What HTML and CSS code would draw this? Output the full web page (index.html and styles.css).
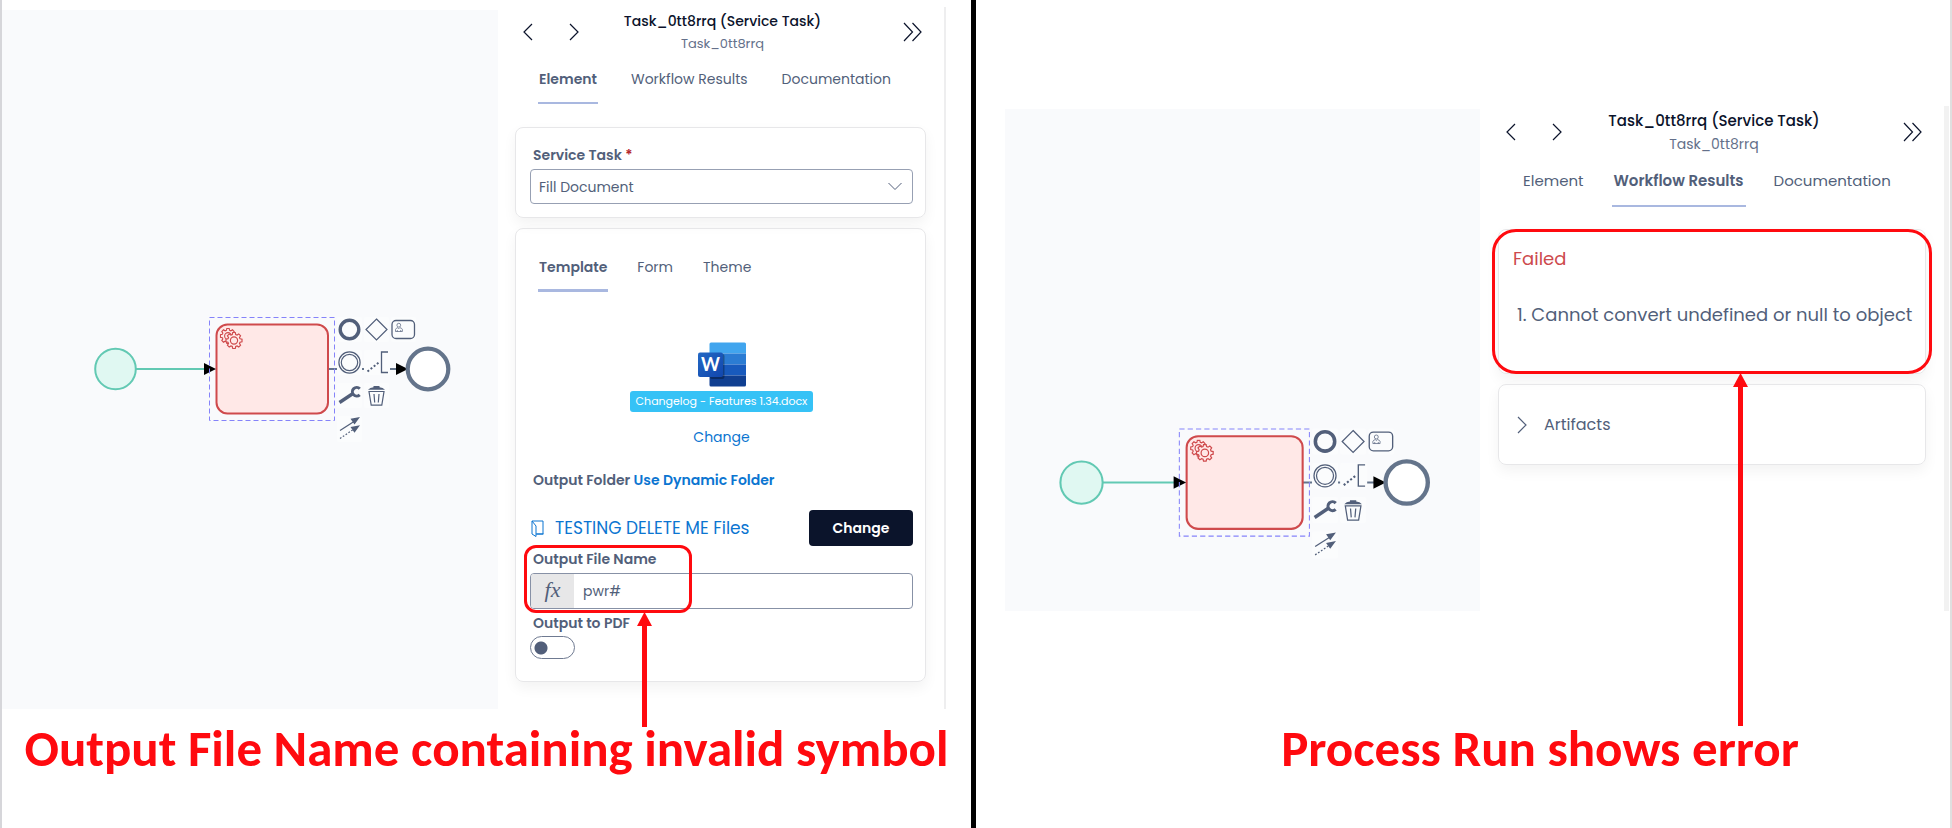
FILE: index.html
```html
<!DOCTYPE html>
<html lang="en">
<head>
<meta charset="utf-8">
<title>Output file name error</title>
<link rel="stylesheet" href="styles.css">
</head>
<body>
<svg class="defs" aria-hidden="true">
  <symbol id="gear" viewBox="-10 -10 20 20">
    <path d="M6.7-1.9 8.9-1.4V1.4L6.7 1.9 6.1 3.4 7.3 5.3 5.3 7.3 3.4 6.1 1.9 6.7 1.4 8.9H-1.4L-1.9 6.7-3.4 6.1-5.3 7.3-7.3 5.3-6.1 3.4-6.7 1.9-8.9 1.4V-1.4L-6.7-1.9-6.1-3.4-7.3-5.3-5.3-7.3-3.4-6.1-1.9-6.7-1.4-8.9H1.4L1.9-6.7 3.4-6.1 5.3-7.3 7.3-5.3 6.1-3.4Z" fill="#ffe8e7" stroke="#cf4a4c" stroke-width="1.300"/>
    <circle r="4" fill="none" stroke="#cf4a4c" stroke-width="1.300"/>
  </symbol>
  <symbol id="flow" viewBox="90 310 370 140">
    <path d="M136 369H206" stroke="#62c9b3" stroke-width="2"/>
    <circle cx="115.500" cy="369" r="20.300" fill="#e0f8f2" stroke="#62c9b3" stroke-width="2"/>
    <path d="M328 369H400" stroke="#64748b" stroke-width="2"/>
    <rect x="216.500" y="324.500" width="111.500" height="89" rx="11" fill="#ffe8e7" stroke="#cf4a4c" stroke-width="2"/>
    <use href="#gear" x="219.500" y="327.500" width="17" height="17"/>
    <use href="#gear" x="225" y="331.500" width="18" height="18"/>
    <path d="M204 363 216 369 204 375ZM396 363 408 369 396 375Z" fill="#000"/>
    <circle cx="428" cy="369" r="20.300" fill="#fff" stroke="#64748b" stroke-width="4.200"/>
    <rect x="209.500" y="317.500" width="125" height="103" fill="none" stroke="#8583fa" stroke-dasharray="5 3"/>
    <g fill="#fbfcfd">
      <rect x="337" y="317" width="25" height="25" rx="2"/><rect x="364" y="317" width="25" height="25" rx="2"/><rect x="391" y="317" width="25" height="25" rx="2"/>
      <rect x="337" y="350" width="25" height="25" rx="2"/><rect x="364" y="350" width="26" height="25" rx="2"/>
      <rect x="337" y="383" width="25" height="25" rx="2"/><rect x="364" y="383" width="25" height="25" rx="2"/><rect x="337" y="416" width="25" height="26" rx="2"/>
    </g>
    <g fill="none" stroke="#525f7a" stroke-width="1.200">
      <circle cx="349.500" cy="329.500" r="9.300" stroke-width="3.400"/>
      <path d="M376.500 319 387 329.500 376.500 340 366 329.500Z"/>
      <rect x="392" y="320.500" width="22.500" height="18" rx="4" stroke-width="1.300"/>
      <g stroke-width=".7"><circle cx="398.800" cy="325.200" r="1.900"/><path d="M395.500 331.500V329.500Q396 328 397.800 327.700L398.800 328.700 399.800 327.700Q402 328 402.400 329.500V331.500ZM397.300 331.500V330M400.700 331.500V330"/></g>
      <circle cx="349.500" cy="362.500" r="10.600"/><circle cx="349.500" cy="362.500" r="8.200"/>
      <path d="M367.500 371.500 379.500 362" stroke-width="2" stroke-dasharray="2 2"/>
      <path d="M388 352H381.500V372.500H388" stroke-width="1.300"/>
      <path d="M339.500 402.500 353 393.500" stroke-width="3.400"/>
      <path d="M359.800 388.700A4.300 4.300 0 1 0 359.700 394.800" stroke-width="3"/>
      <path d="M369 391.500H384L381.800 405.200H371.200ZM374 394 374.700 402.500M379 394 378.300 402.500"/>
      <path d="M340 430.500 354 421.500"/>
      <path d="M340 438.500 354 429" stroke-dasharray="1.700 1.700"/>
    </g>
    <path d="M368 389.800Q370 387.300 373.500 387.300V386H379.500V387.300Q383 387.300 385 389.800ZM360 417 354.500 424.500 350.500 418.800ZM360 425.200 354.500 432.700 350.500 427Z" fill="#525f7a"/>
  </symbol>
  <symbol id="left" viewBox="0 0 10 18"><path d="M9 1 1 9 9 17" fill="none" stroke="currentColor" stroke-width="1.200"/></symbol>
  <symbol id="right" viewBox="0 0 10 18"><path d="M1 1 9 9 1 17" fill="none" stroke="currentColor" stroke-width="1.200"/></symbol>
  <symbol id="double" viewBox="0 0 19 20"><path d="M1 1 9.500 10 1 19M9.500 1 18 10 9.500 19" fill="none" stroke="currentColor" stroke-width="1.200"/></symbol>
  <symbol id="arrowhead" viewBox="0 0 15 14"><path d="M7.500 0 15 14H0Z" fill="currentColor"/></symbol>
</svg>

<main class="compare">
  <section class="half half-left">
    <div class="screen">
      <div class="canvas"><svg class="flow" role="img" aria-label="Process diagram"><use href="#flow"/></svg></div>
      <aside class="panel">
        <header class="head">
          <div class="steps">
            <button class="icon-button" aria-label="Previous"><svg class="chevron"><use href="#left"/></svg></button>
            <button class="icon-button" aria-label="Next"><svg class="chevron"><use href="#right"/></svg></button>
          </div>
          <div class="names"><h1 class="title">Task_0tt8rrq (Service Task)</h1><p class="subtitle">Task_0tt8rrq</p></div>
          <button class="icon-button collapse" aria-label="Collapse"><svg class="chevrons"><use href="#double"/></svg></button>
        </header>
        <nav class="tabs">
          <button class="tab active">Element</button><button class="tab">Workflow Results</button><button class="tab">Documentation</button>
        </nav>
        <div class="card service">
          <label class="label" for="service">Service Task <span class="required">*</span></label>
          <div class="select-wrap">
            <select class="select" id="service"><option>Fill Document</option></select>
            <svg class="caret" viewBox="0 0 14 9"><path d="M.5 1 7 7.500 13.500 1" fill="none" stroke="currentColor"/></svg>
          </div>
        </div>
        <div class="card config">
          <nav class="tabs subtabs">
            <button class="tab active">Template</button><button class="tab">Form</button><button class="tab">Theme</button>
          </nav>
          <div class="template">
            <svg class="word" viewBox="0 0 48 45" role="img" aria-label="Word document">
              <defs><linearGradient id="tile" x2="1" y2="1"><stop stop-color="#2368c4"/><stop offset="1" stop-color="#1146ad"/></linearGradient></defs>
              <path d="M11.500 11.500V2Q11.500.5 13 .5H46.500Q48 .5 48 2V11.500Z" fill="#41a5ee"/>
              <path d="M11.500 11.500H48V22.500H11.500Z" fill="#2b7cd3"/>
              <path d="M11.500 22.500H48V33.500H11.500Z" fill="#185abd"/>
              <path d="M11.500 33.500H48V43Q48 44.500 46.500 44.500H13Q11.500 44.500 11.500 43Z" fill="#103f91"/>
              <rect x="12" y="12" width="14.500" height="25" rx="2" fill="#000" opacity=".3"/>
              <rect y="10.500" width="25" height="24.500" rx="2" fill="url(#tile)"/>
              <text class="word-letter" x="12.500" y="29" text-anchor="middle">W</text>
            </svg>
            <span class="badge">Changelog - Features 1.34.docx</span>
            <a class="link" href="#">Change</a>
          </div>
          <p class="label folder">Output Folder <a class="link" href="#">Use Dynamic Folder</a></p>
          <div class="folder-row">
            <svg class="folder-icon" viewBox="0 0 14 17"><path d="M1 1H12V14H5.500M1 1V14L5 16.500V6L1 1M5 14H12.500" fill="none" stroke="currentColor"/></svg>
            <a class="link folder-link" href="#">TESTING DELETE ME Files</a>
            <button class="primary">Change</button>
          </div>
          <div class="filename">
            <label class="label" for="filename">Output File Name</label>
            <div class="input-group"><span class="fx">fx</span><input class="input" id="filename" value="pwr#"></div>
            <div class="mark mark-name"><span class="arrow"><svg class="arrow-tip"><use href="#arrowhead"/></svg></span></div>
          </div>
          <label class="label" for="pdf">Output to PDF</label>
          <input class="toggle" id="pdf" type="checkbox" role="switch">
        </div>
      </aside>
    </div>
    <h2 class="caption">Output File Name containing invalid symbol</h2>
  </section>

  <section class="half half-right">
    <div class="screen">
      <div class="canvas"><svg class="flow" role="img" aria-label="Process diagram"><use href="#flow"/></svg></div>
      <aside class="panel">
        <header class="head">
          <div class="steps">
            <button class="icon-button" aria-label="Previous"><svg class="chevron"><use href="#left"/></svg></button>
            <button class="icon-button" aria-label="Next"><svg class="chevron"><use href="#right"/></svg></button>
          </div>
          <div class="names"><h1 class="title">Task_0tt8rrq (Service Task)</h1><p class="subtitle">Task_0tt8rrq</p></div>
          <button class="icon-button collapse" aria-label="Collapse"><svg class="chevrons"><use href="#double"/></svg></button>
        </header>
        <nav class="tabs">
          <button class="tab">Element</button><button class="tab active">Workflow Results</button><button class="tab">Documentation</button>
        </nav>
        <div class="card result">
          <p class="failed">Failed</p>
          <ol class="errors"><li>Cannot convert undefined or null to object</li></ol>
          <div class="mark mark-error"><span class="arrow"><svg class="arrow-tip"><use href="#arrowhead"/></svg></span></div>
        </div>
        <div class="card artifacts">
          <button class="expand"><svg class="chevron"><use href="#right"/></svg>Artifacts</button>
        </div>
      </aside>
    </div>
    <h2 class="caption">Process Run shows error</h2>
  </section>
</main>
</body>
</html>
```
FILE: styles.css
```css
* { box-sizing: border-box; }
body, h1, h2, p, ol { margin: 0; }
body { background: #fff; color: #525f7a; font: 14px/22px Poppins, Inter, sans-serif; }
button, input, select { font: inherit; color: inherit; }
button { border: 0; padding: 0; background: none; }
svg { display: block; }
.defs { display: none; }

.compare { display: grid; grid-template-columns: 971fr 5px 976fr; min-height: 100vh; background: #000; }
.half { display: flex; flex-direction: column; background: #fff; }
.half-left { grid-column: 1; border-left: 2px solid #d6d6da; padding-top: 7px; }
.half-right { grid-column: 3; border-right: 2px solid #dfdfdf; padding: 106px 1px 0 29px; font-size: 15px; }
.screen { display: flex; }
.half-left .screen { padding-right: 25px; }
.canvas { flex: 1; margin-top: 3px; background: #f9fafc; }
.half-left .canvas { padding: 300px 0 0 88px; }
.half-right .canvas { padding: 312px 0 0 50px; min-height: 502px; }
.flow { width: 370px; height: 140px; }
.half-right .flow { width: 385px; height: 146px; }

.panel { width: 448px; padding: 2px 18px 27px 17px; border-right: 2px solid #eeeeef; }
.half-right .panel { width: 469px; padding: 3px 18px 0; border-right: 5px solid #f2f2f2; }
.head { display: grid; grid-template-columns: 1fr auto 1fr; align-items: center; color: #0b132b; padding: 0 4px 0 8px; }
.steps { display: flex; gap: 36px; }
.icon-button { display: block; }
.collapse { justify-self: end; }
.chevron { width: 10px; height: 18px; }
.chevrons { width: 19px; height: 20px; }
.names { text-align: center; }
.title { font-size: inherit; line-height: 24px; font-weight: 500; }
.subtitle { font-size: 13px; color: #64708a; }
.half-right .subtitle { font-size: 14px; }
.tabs { display: flex; gap: 32px; padding-left: 23px; margin: 12px 0 23px; line-height: 24px; }
.tab { padding: 0 1px 11px; border-bottom: 2px solid transparent; white-space: nowrap; }
.tab.active { font-weight: 600; border-color: #a9b8e0; }
.half-right .tabs { gap: 26px; margin: 14px 0 22px; }
.half-right .tab { padding: 0 2px 12px; }

.card { position: relative; border: 1px solid #e7e7e9; border-radius: 8px; box-shadow: 0 6px 14px rgba(0, 0, 0, .05); margin-bottom: 10px; padding: 0 12px 0 14px; }
.card:last-child { margin-bottom: 0; }
.service { padding-top: 16px; padding-bottom: 13px; }
.label { display: block; font-weight: 600; padding-left: 3px; }
.required { color: #b3262b; }
.select-wrap { position: relative; margin-top: 3px; }
.select { display: block; appearance: none; width: 100%; height: 35px; padding: 0 8px; border: 1px solid #97a0b3; border-radius: 4px; background: #fff; }
.caret { position: absolute; right: 11px; top: 13px; width: 14px; height: 9px; pointer-events: none; }
.config { padding-top: 26px; padding-bottom: 22px; }
.subtabs { margin: 0; padding-left: 8px; gap: 28px; }
.subtabs .tab { padding-bottom: 10px; border-bottom-width: 3px; }
.template { display: flex; flex-direction: column; align-items: center; margin-top: 50px; }
.word { width: 48px; height: 45px; overflow: visible; }
.word-letter { font: 700 18px Lato, sans-serif; fill: #fff; }
.badge { margin: 4px 0 13px; padding: 0 6px; border-radius: 3px; background: #36c2f6; color: #fff; font-size: 11px; line-height: 21px; }
.link { color: #0b75d1; text-decoration: none; line-height: 24px; }
.folder { margin: 20px 0 19px; line-height: 22px; }
.folder .link { line-height: 22px; }
.folder-row { display: flex; align-items: center; color: #0b75d1; }
.folder-icon { width: 14px; height: 17px; margin: 0 10px 0 1px; }
.folder-link { flex: 1; font-size: 17px; }
.primary { width: 104px; height: 36px; border-radius: 4px; background: #0b142b; color: #fff; font-weight: 600; }
.filename { position: relative; margin: 2px 0 3px; }
.input-group { display: flex; height: 36px; margin-top: 3px; border: 1px solid #8791a6; border-radius: 4px; overflow: hidden; }
.fx { width: 43px; background: #e7e7e8; text-align: center; font: italic 22px/32px "Liberation Serif", serif; }
.input { flex: 1; min-width: 0; border: 0; padding: 0 9px; background: none; }
.toggle { appearance: none; display: block; width: 45px; height: 23px; margin: 2px 0 0; border: 1px solid #6f7a91; border-radius: 12px; background: radial-gradient(circle at 10px 11px, #525f7a 6px, transparent 7px); }

.result { padding-top: 17px; padding-bottom: 44px; }
.failed { color: #cd4a4d; font-size: 18px; line-height: 24px; }
.errors { margin-top: 30px; padding: 0 0 0 4px; font-size: 18px; line-height: 28px; list-style-position: inside; white-space: nowrap; }
.artifacts { padding: 28px 18px; }
.expand { display: flex; align-items: center; gap: 17px; font-size: 16px; line-height: 23px; }

.mark { position: absolute; z-index: 1; border: 3px solid #ff0a0f; color: #ff0a0f; pointer-events: none; }
.mark-name { left: -6px; top: -3px; width: 168px; height: 68px; border-radius: 12px; }
.mark-error { inset: -1px -7px; border-radius: 24px; }
.arrow { position: absolute; top: calc(100% + 2px); width: 5px; background: linear-gradient(#ff0a0f, #ff0a0f) 0 10px no-repeat; }
.mark-name .arrow { left: 115px; height: 115px; }
.mark-error .arrow { left: 243px; height: 353px; }
.arrow-tip { position: absolute; left: -5px; top: 0; width: 15px; height: 14px; }
.caption { margin-top: auto; padding-bottom: 50px; text-align: center; white-space: nowrap; font: 700 51px/58px Calibri, Carlito, Lato, sans-serif; color: #ff0a0f; }
.half-right .caption { padding-left: 126px; }
```
